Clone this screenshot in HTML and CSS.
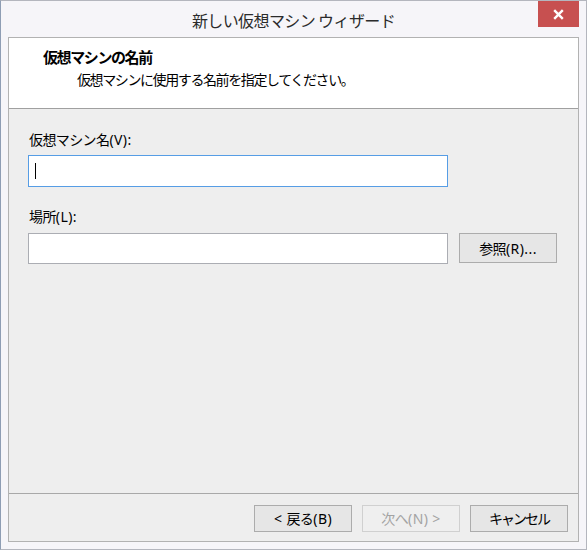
FILE: index.html
```html
<!DOCTYPE html>
<html lang="ja">
<head>
<meta charset="utf-8">
<title>新しい仮想マシン ウィザード</title>
<link rel="stylesheet" href="styles.css">
</head>
<body>
<div class="window">
  <div class="titlebar">
    <div class="tb-side"></div>
    <div class="tb-title">新しい仮想マシン ウィザード</div>
    <div class="tb-side tb-right">
      <div class="close">
        <svg width="11" height="11" viewBox="0 0 11 11"><path d="M1.2 1.2 L9.8 9.8 M9.8 1.2 L1.2 9.8" stroke="#ffffff" stroke-width="2.4" fill="none"/></svg>
      </div>
    </div>
  </div>
  <div class="client">
    <div class="header">
      <div class="h-title">仮想マシンの名前</div>
      <div class="h-sub">仮想マシンに使用する名前を指定してください。</div>
    </div>
    <div class="content">
      <div class="field field-name">
        <div class="label">仮想マシン名<span class="lat">(V):</span></div>
        <div class="textbox focused"><span class="caret"></span></div>
      </div>
      <div class="field field-loc">
        <div class="label">場所<span class="lat">(L):</span></div>
        <div class="row">
          <div class="textbox tb-loc"></div>
          <div class="btn btn-browse">参照<span class="lat">(R)...</span></div>
        </div>
      </div>
    </div>
    <div class="footer">
      <div class="btn"><span class="lat">&lt; </span>戻る<span class="lat">(B)</span></div>
      <div class="btn disabled">次へ<span class="lat">(N) &gt;</span></div>
      <div class="btn btn-cancel">キャンセル</div>
    </div>
  </div>
</div>
</body>
</html>
```
FILE: styles.css
```css
html, body {
  margin: 0;
  padding: 0;
  background: #f6f5f9;
}
body {
  font-family: "Noto Sans CJK JP", "Noto Sans", sans-serif;
  color: #000;
}
.window {
  box-sizing: border-box;
  width: 587px;
  height: 550px;
  border: 1px solid #b4b6be;
  border-left-color: #8e9db4;
  background: #f6f5f9;
  padding: 0 7px 7px 7px;
  display: flex;
  flex-direction: column;
}
.titlebar {
  height: 36px;
  display: grid;
  grid-template-columns: 1fr auto 1fr;
  align-items: start;
}
.tb-title {
  font-size: 16px;
  letter-spacing: -0.6px;
  line-height: 22px;
  margin-top: 8px;
  color: #2b2b2b;
  white-space: nowrap;
}
.tb-right {
  display: flex;
  justify-content: flex-end;
}
.close {
  width: 41px;
  height: 26px;
  background: #c75050;
  display: flex;
  align-items: center;
  justify-content: center;
}
.close svg {
  display: block;
}
.client {
  flex: 1;
  border: 1px solid #b2b2b2;
  background: #eeeeee;
  display: flex;
  flex-direction: column;
}
.header {
  height: 71px;
  box-sizing: border-box;
  background: #ffffff;
  border-bottom: 1px solid #a0a0a0;
  padding: 10px 0 0 34px;
}
.h-title {
  font-size: 15px;
  font-weight: bold;
  letter-spacing: -1.4px;
  line-height: 18px;
}
.h-sub {
  font-size: 14px;
  letter-spacing: -1.4px;
  line-height: 18px;
  margin-top: 4px;
  padding-left: 34px;
}
.content {
  flex: 1;
  padding: 21px 0 0 19px;
}
.lat {
  font-family: "Noto Sans", sans-serif;
  letter-spacing: 0.4px;
}
.label {
  font-size: 14px;
  letter-spacing: -0.6px;
  line-height: 18px;
  padding-left: 1px;
}
.field-name .label {
  margin-bottom: 6px;
}
.field-loc {
  margin-top: 20px;
}
.field-loc .label {
  margin-bottom: 7px;
}
.textbox {
  box-sizing: border-box;
  width: 420px;
  height: 32px;
  background: #ffffff;
  border: 1px solid #abadb3;
  display: flex;
  align-items: center;
}
.textbox.focused {
  border-color: #569de5;
}
.caret {
  width: 1px;
  height: 16px;
  background: #000;
  margin-left: 6px;
}
.tb-loc {
  height: 31px;
}
.row {
  display: flex;
  align-items: flex-start;
}
.btn {
  box-sizing: border-box;
  width: 98px;
  height: 27px;
  border: 1px solid #acacac;
  background: #e6e6e6;
  font-size: 14px;
  letter-spacing: -0.6px;
  line-height: 25px;
  text-align: center;
  color: #000;
  white-space: pre;
}
.btn-browse {
  height: 30px;
  line-height: 28px;
  margin-left: 11px;
}
.btn-cancel {
  letter-spacing: -2px;
}
.btn.disabled {
  color: #a3a3a3;
  border-color: #d0d0d0;
  background: #efefef;
}
.footer {
  height: 48px;
  box-sizing: border-box;
  border-top: 1px solid #a8a8a8;
  padding: 11px 10px 0 0;
  display: flex;
  justify-content: flex-end;
  gap: 10px;
}
```
